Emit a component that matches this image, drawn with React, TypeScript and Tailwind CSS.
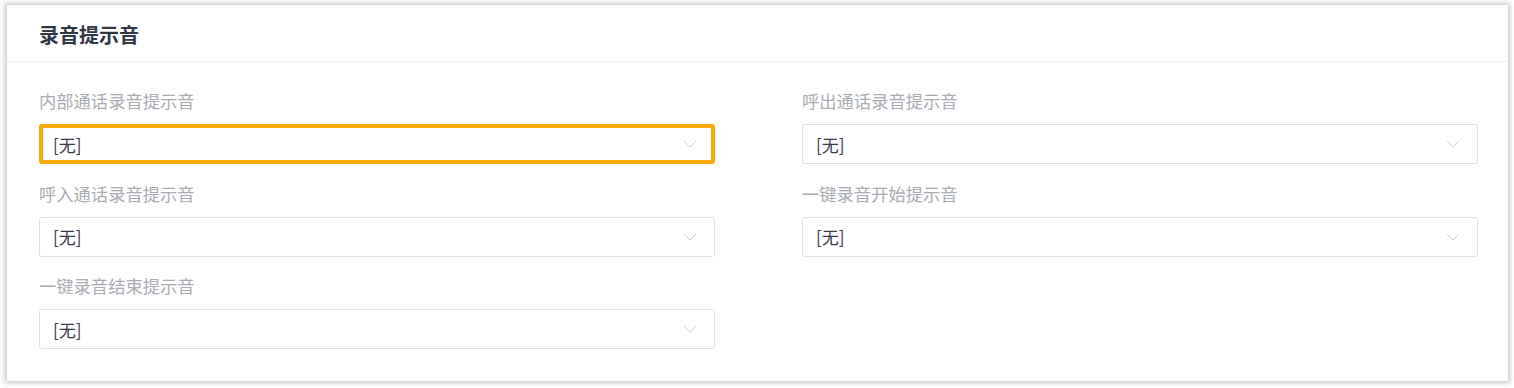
const fields = [
  { id: "internal", label: "内部通话录音提示音", focused: true },
  { id: "outbound", label: "呼出通话录音提示音" },
  { id: "inbound", label: "呼入通话录音提示音" },
  { id: "oneTouchStart", label: "一键录音开始提示音" },
  { id: "oneTouchEnd", label: "一键录音结束提示音" },
];

function Chevron() {
  return (
    <svg
      width="14"
      height="8"
      viewBox="0 0 14 8"
      fill="none"
      className="shrink-0"
    >
      <path d="M1 1l6 6 6-6" stroke="#cdd0d5" strokeWidth="1" />
    </svg>
  );
}

function PromptSelect({ focused }: { focused?: boolean }) {
  return (
    <div
      className={`flex h-10 w-full items-center justify-between rounded-[3px] bg-white ${
        focused
          ? "border-4 border-[#f7aa0a] pl-[10px] pr-[14px]"
          : "border border-[#dcdfe6] pl-[13px] pr-[17px]"
      }`}
    >
      <span className="text-[17px] leading-none text-[#363c48]">[无]</span>
      <Chevron />
    </div>
  );
}

export default function App() {
  return (
    <div
      className="min-h-[388px] w-[1514px] bg-white pb-[7px] pl-[7px] pr-[6px] pt-[5px]"
      style={{ fontFamily: '"Noto Sans CJK SC", "Noto Sans", sans-serif' }}
    >
      <div className="bg-white shadow-[0_0_5px_2px_rgba(0,0,0,0.22)]">
        <div className="border-b border-[#ebeef2] pb-[14px] pl-[32px] pt-[18px]">
          <h2 className="text-[20px] font-bold leading-[24px] text-[#313845]">
            录音提示音
          </h2>
        </div>

        <div className="grid grid-cols-[676px_676px] gap-x-[87px] gap-y-[18.5px] pb-[32px] pl-[32px] pt-[28px]">
          {fields.map((field) => (
            <div key={field.id}>
              <div className="mb-[12px] text-[17.3px] leading-[22px] text-[#a9acb3]">
                {field.label}
              </div>
              <PromptSelect focused={field.focused} />
            </div>
          ))}
        </div>
      </div>
    </div>
  );
}
